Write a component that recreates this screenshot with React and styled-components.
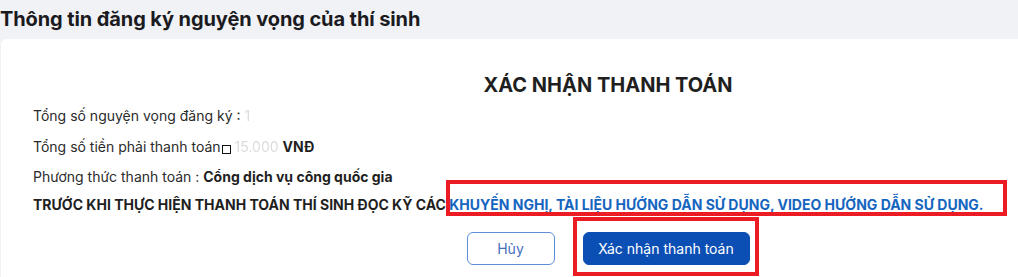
import React from 'react';
import styled, { createGlobalStyle } from 'styled-components';

const GlobalStyle = createGlobalStyle`
  html, body {
    margin: 0;
    padding: 0;
    background: #f0f2f5;
    overflow: hidden;
    font-family: Inter, "Noto Sans", sans-serif;
  }
`;

const Page = styled.div`
  width: 1018px;
  height: 277px;
  overflow: hidden;
`;

const Heading = styled.h2`
  margin: 0;
  padding: 7px 0 0 0;
  height: 32px;
  font-size: 20px;
  font-weight: 700;
  color: #1b1b1f;
  letter-spacing: -0.1px;
`;

const Card = styled.div`
  position: relative;
  margin: 0 0 0 1px;
  width: 1214px;
  height: 260px;
  background: #fff;
  border-radius: 6px;
  padding: 34px 32px 0;
  box-sizing: border-box;
`;

const Title = styled.h3`
  margin: 0 0 9px;
  text-align: center;
  font-size: 20px;
  font-weight: 700;
  color: #1f1f1f;
`;

const Line = styled.div`
  font-size: 14px;
  color: #2b2b2b;
  height: ${(p) => p.h || 31}px;
  line-height: 20px;
`;

const Strong = styled.b`
  font-weight: 700;
  color: #1f1f1f;
`;

const Faded = styled.span`
  color: #dcdcdc;
  filter: blur(0.6px);
`;

const Missing = styled.span`
  display: inline-block;
  width: 7px;
  height: 7px;
  border: 1px solid #111;
  margin: 0 4px 0 1px;
  vertical-align: -2px;
`;

const Notice = styled.div`
  font-size: 14px;
  font-weight: 700;
  color: #1f1f1f;
  white-space: nowrap;
  height: 37px;
  line-height: 20px;
`;

const Link = styled.span`
  color: #1565c0;
`;

const Actions = styled.div`
  display: flex;
  justify-content: center;
  gap: 28px;
`;

const Button = styled.button`
  font-family: inherit;
  font-size: 14px;
  height: 33px;
  border-radius: 6px;
  padding: 0;
  cursor: pointer;
  border: 1px solid ${(p) => (p.primary ? '#0b4fb5' : '#5f8ed8')};
  background: ${(p) => (p.primary ? '#0b4fb5' : '#fff')};
  color: ${(p) => (p.primary ? '#fff' : '#4470c0')};
  width: ${(p) => p.w}px;
`;

const Mark = styled.div`
  position: absolute;
  border: 4px solid #ec1c24;
  pointer-events: none;
`;

export default function App() {
  return (
    <Page>
      <GlobalStyle />
      <Heading>Thông tin đăng ký nguyện vọng của thí sinh</Heading>
      <Card>
        <Title>XÁC NHẬN THANH TOÁN</Title>
        <Line>
          Tổng số nguyện vọng đăng ký : <Faded>1</Faded>
        </Line>
        <Line h={30}>
          Tổng số tiền phải thanh toán<Missing />
          <Faded>15.000</Faded> <Strong>VNĐ</Strong>
        </Line>
        <Line h={28}>
          Phương thức thanh toán : <Strong>Cổng dịch vụ công quốc gia</Strong>
        </Line>
        <Notice>
          TRƯỚC KHI THỰC HIỆN THANH TOÁN THÍ SINH ĐỌC KỸ CÁC
          <Link> KHUYẾN NGHỊ, TÀI LIỆU HƯỚNG DẪN SỬ DỤNG, VIDEO HƯỚNG DẪN SỬ DỤNG.</Link>
        </Notice>
        <Actions>
          <Button w={88}>Hủy</Button>
          <Button primary w={167}>Xác nhận thanh toán</Button>
        </Actions>
        <Mark style={{ left: 445, top: 141, width: 553, height: 28 }} />
        <Mark style={{ left: 572, top: 178, width: 178, height: 51 }} />
      </Card>
    </Page>
  );
}
